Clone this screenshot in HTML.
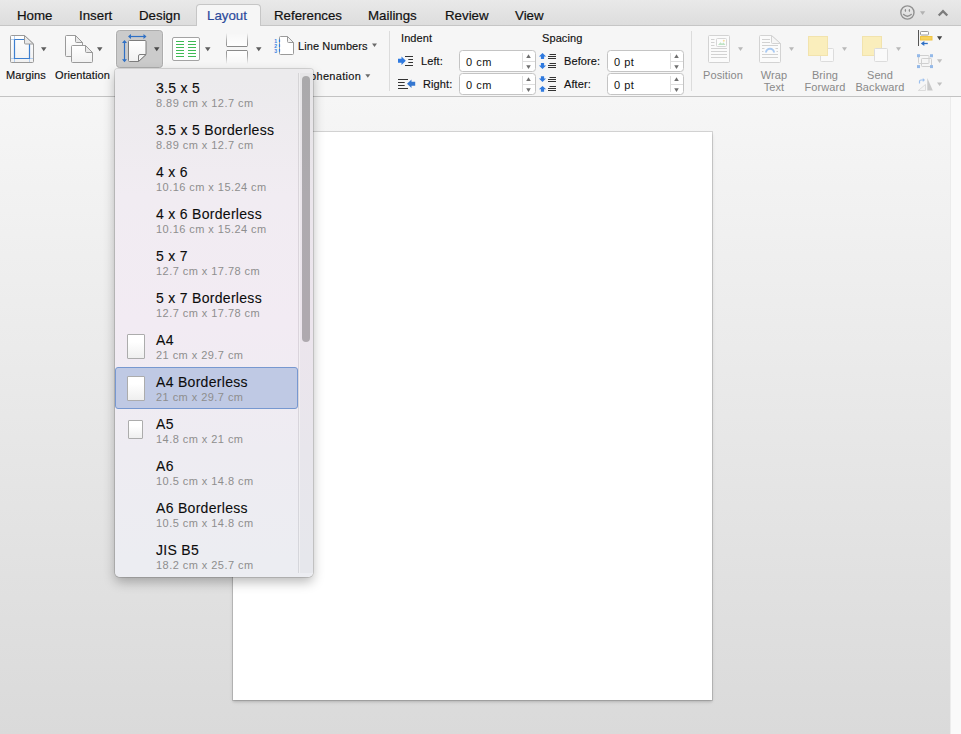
<!DOCTYPE html>
<html>
<head>
<meta charset="utf-8">
<title>Layout</title>
<style>
html,body{margin:0;padding:0;}
body{width:961px;height:734px;overflow:hidden;position:relative;font-family:"Liberation Sans",sans-serif;color:#000;background:#e6e6e6;}
.abs{position:absolute;}
#doc{left:0;top:97px;width:950px;height:637px;background:linear-gradient(#f6f6f6,#dadada);}
#vscroll{left:950px;top:97px;width:11px;height:637px;background:#fafafa;border-left:1px solid #ececec;box-sizing:border-box;}
#page{left:233px;top:132px;width:479px;height:568px;background:#fff;box-shadow:0 0 0 1px rgba(0,0,0,.13),0 2px 2px rgba(0,0,0,.10),0 2px 4px rgba(0,0,0,.10);}
#tabbar{left:0;top:0;width:961px;height:26px;background:linear-gradient(#e9e9e9,#dddddd);border-bottom:1px solid #c6c6c6;box-sizing:border-box;}
.tab{position:absolute;top:8px;font-size:13.3px;line-height:15px;color:#111;white-space:nowrap;-webkit-text-stroke:.2px currentColor;}
#tabsel{left:195.5px;top:3.5px;width:65px;height:23.5px;background:#f6f6f6;border:1px solid #c6c6c6;border-bottom:none;border-radius:4px 4px 0 0;box-sizing:border-box;}
#ribbon{left:0;top:26px;width:961px;height:71px;background:#f6f6f6;border-bottom:1px solid #c3c3c3;box-sizing:border-box;}
.lbl{position:absolute;font-size:11px;line-height:13px;white-space:nowrap;color:#111;letter-spacing:.1px;-webkit-text-stroke:.15px #111;}
.dis{color:#898989;-webkit-text-stroke:0;line-height:12px;}
.arr{position:absolute;width:0;height:0;border-left:3px solid transparent;border-right:3px solid transparent;border-top:4px solid #6e6e6e;}
.arr.d{border-top-color:#bdbdbd;}
.sep{position:absolute;top:31px;width:1px;height:60px;background:#dcdcdc;}
.inp{position:absolute;width:77px;background:#fff;border:1px solid #c4c4c4;border-radius:3.5px;box-sizing:border-box;font-size:11px;line-height:23px;padding-left:6px;letter-spacing:.5px;color:#111;height:22px;}
.inp i{position:absolute;left:62px;top:2px;width:1px;height:16px;background:#dedede;}
.inp u{position:absolute;left:63px;top:10px;width:12px;height:1px;background:#dedede;}
.inp b{position:absolute;left:66px;width:0;height:0;border-left:2.5px solid transparent;border-right:2.5px solid transparent;}
.inp b.u{top:3px;border-bottom:4px solid #808080;}
.inp b.dn{top:14px;border-top:4px solid #808080;}
#selbtn{left:116px;top:30px;width:47px;height:38px;background:#cbcbcb;border:1px solid #adadad;border-radius:3.5px;box-sizing:border-box;box-shadow:0 0 0 1px rgba(255,255,255,.6);}
#menu{left:115px;top:69px;width:198px;height:508px;background:linear-gradient(180deg,#ecebed 0%,#ecebed 2%,#f1ecf2 25%,#f2ebf3 50%,#eeecf2 75%,#ecedf2 97%,#ecedf2 100%);border-radius:3px 3px 5px 5px;box-shadow:0 0 0 1px rgba(0,0,0,.13),0 5px 12px rgba(0,0,0,.28);overflow:hidden;}
.it{position:absolute;left:0;width:183px;height:42px;}
.it .t{position:absolute;left:41px;top:13px;font-size:14px;line-height:16px;color:#0c0c0c;white-space:nowrap;letter-spacing:.3px;-webkit-text-stroke:.1px #0c0c0c;}
.it .s{position:absolute;left:41px;top:30px;font-size:11px;line-height:13px;color:#8e8e8e;white-space:nowrap;letter-spacing:.45px;}
.it.sel{background:#bfc9e4;border:1px solid #7798d0;border-radius:3px;box-sizing:border-box;}
.pg{position:absolute;background:linear-gradient(#fff 30%,#efefef);border:1px solid #acacac;border-radius:1px;box-sizing:border-box;}
#track{left:183px;top:4px;width:15px;height:500px;background:rgba(0,0,0,.022);border-left:1px solid rgba(0,0,0,.07);box-shadow:inset 1px 0 0 rgba(255,255,255,.35);box-sizing:border-box;}
#thumb{left:187px;top:7px;width:8px;height:266px;background:rgba(0,0,0,.26);border-radius:4px;}
</style>
</head>
<body>
<div id="doc" class="abs"></div>
<div id="vscroll" class="abs"></div>
<div id="page" class="abs"></div>

<div id="tabbar" class="abs"></div>
<div id="tabsel" class="abs"></div>
<div class="tab" style="left:17px">Home</div>
<div class="tab" style="left:79px">Insert</div>
<div class="tab" style="left:139px">Design</div>
<div class="tab" style="left:207px;color:#2b4a9b">Layout</div>
<div class="tab" style="left:274px">References</div>
<div class="tab" style="left:368px">Mailings</div>
<div class="tab" style="left:445px">Review</div>
<div class="tab" style="left:515px">View</div>

<div id="ribbon" class="abs"></div>
<div id="selbtn" class="abs"></div>

<!-- ribbon labels -->
<div class="lbl" style="left:6px;top:69px">Margins</div>
<div class="lbl" style="left:55px;top:69px">Orientation</div>
<div class="lbl" style="left:298px;top:40px">Line Numbers</div>
<div class="lbl" style="left:296px;top:70px;letter-spacing:.3px">Hyphenation</div>
<div class="lbl" style="left:401px;top:32px">Indent</div>
<div class="lbl" style="left:542px;top:32px">Spacing</div>
<div class="lbl" style="left:421px;top:55px">Left:</div>
<div class="lbl" style="left:423px;top:78px">Right:</div>
<div class="lbl" style="left:564px;top:55px">Before:</div>
<div class="lbl" style="left:564px;top:78px">After:</div>
<div class="inp" style="left:459px;top:50px">0 cm<i></i><u></u></div>
<div class="inp" style="left:459px;top:73px">0 cm<i></i><u></u></div>
<div class="inp" style="left:607px;top:50px">0 pt<i></i><u></u></div>
<div class="inp" style="left:607px;top:73px">0 pt<i></i><u></u></div>
<div class="sep" style="left:389px"></div>
<div class="sep" style="left:691px"></div>
<div class="lbl dis" style="left:703px;top:69px">Position</div>
<div class="lbl dis" style="left:760px;top:69px;text-align:center;width:28px">Wrap<br>Text</div>
<div class="lbl dis" style="left:804px;top:69px;text-align:center;width:42px">Bring<br>Forward</div>
<div class="lbl dis" style="left:855px;top:69px;text-align:center;width:50px">Send<br>Backward</div>

<svg class="abs" style="left:0;top:0" width="961" height="97" viewBox="0 0 961 97">
<defs>
<linearGradient id="pgf" x1="0" y1="0" x2="0" y2="1"><stop offset="0" stop-color="#ffffff"/><stop offset="1" stop-color="#f1f1f1"/></linearGradient>
<linearGradient id="fadeUp" x1="0" y1="0" x2="0" y2="1"><stop offset="0" stop-color="#8a8a8a" stop-opacity="0"/><stop offset=".55" stop-color="#8a8a8a" stop-opacity=".7"/><stop offset="1" stop-color="#8a8a8a"/></linearGradient>
<linearGradient id="fadeDn" x1="0" y1="1" x2="0" y2="0"><stop offset="0" stop-color="#8a8a8a" stop-opacity="0"/><stop offset=".55" stop-color="#8a8a8a" stop-opacity=".7"/><stop offset="1" stop-color="#8a8a8a"/></linearGradient>
<linearGradient id="fillUp" x1="0" y1="0" x2="0" y2="1"><stop offset="0" stop-color="#fff" stop-opacity="0"/><stop offset="1" stop-color="#fff"/></linearGradient>
<linearGradient id="fillDn" x1="0" y1="1" x2="0" y2="0"><stop offset="0" stop-color="#fff" stop-opacity="0"/><stop offset="1" stop-color="#fff"/></linearGradient>
</defs>
<path d="M41 47.3H46.5L43.75 51.3Z" fill="#5e5e5e"/>
<path d="M97 47.3H102.5L99.75 51.3Z" fill="#5e5e5e"/>
<path d="M154 47.3H159.5L156.75 51.3Z" fill="#4a4a4a"/>
<path d="M205 47.3H210.5L207.75 51.3Z" fill="#5e5e5e"/>
<path d="M256 47.3H261.5L258.75 51.3Z" fill="#5e5e5e"/>
<path d="M372 43.5H377L374.5 47Z" fill="#6a6a6a"/>
<path d="M365.3 74.2H370.3L367.8 77.700Z" fill="#6a6a6a"/>
<path d="M738 47.2H743L740.5 51Z" fill="#b9b9b9"/>
<path d="M789 47.2H794L791.5 51Z" fill="#b9b9b9"/>
<path d="M842 47.2H847L844.5 51Z" fill="#b9b9b9"/>
<path d="M896 47.2H901L898.5 51Z" fill="#b9b9b9"/>
<g>
<path d="M11.5 35.5H24.5L33.5 44V61.5a1 1 0 0 1-1 1H11.5a1 1 0 0 1-1-1V36.5a1 1 0 0 1 1-1Z" fill="url(#pgf)" stroke="#9a9a9a"/>
<path d="M14.5 36V62M29.5 44V62M11 39.5H24M11 58.5H33" stroke="#b4cff0" stroke-width="1" fill="none"/>
<path d="M14.5 39.5H24.5M29.5 44V58.5H14.5V39.5" stroke="#3c7fd0" stroke-width="1.2" fill="none"/>
<path d="M24.5 35.5V43a1 1 0 0 0 1 1H33.5Z" fill="#e9e9e9" stroke="#9a9a9a" stroke-linejoin="round"/>
</g>
<g>
<path d="M66.5 35.5H75.5L82.5 42.5V55.5a1 1 0 0 1-1 1H66.5a1 1 0 0 1-1-1V36.5a1 1 0 0 1 1-1Z" fill="url(#pgf)" stroke="#9a9a9a"/>
<path d="M75.5 35.5V41.5a1 1 0 0 0 1 1H82.5Z" fill="#e9e9e9" stroke="#9a9a9a" stroke-linejoin="round"/>
<path d="M72.5 45.5H85.5L92.5 52.5V61.5a1 1 0 0 1-1 1H72.5a1 1 0 0 1-1-1V46.5a1 1 0 0 1 1-1Z" fill="url(#pgf)" stroke="#9a9a9a"/>
<path d="M85.5 45.5V51.5a1 1 0 0 0 1 1H92.5Z" fill="#e9e9e9" stroke="#9a9a9a" stroke-linejoin="round"/>
</g>
<g>
<path d="M129.5 40.5H145a1 1 0 0 1 1 1V54.5L138.5 61.5H129.5a1 1 0 0 1-1-1V41.5a1 1 0 0 1 1-1Z" fill="url(#pgf)" stroke="#7d7d7d"/>
<path d="M138.5 61.5V56a1.5 1.5 0 0 1 1.5-1.5H146Z" fill="#f4f4f4" stroke="#7d7d7d" stroke-linejoin="round"/>
<path d="M129 36.5H145.5" stroke="#2f70c5" stroke-width="1.2"/>
<path d="M131 34L128 36.5L131 39ZM143.500 34L146.500 36.500L143.500 39Z" fill="#2f70c5"/>
<path d="M124.500 41V61" stroke="#2f70c5" stroke-width="1.2"/>
<path d="M122 43L124.500 40L127 43ZM122 59.300L124.500 62.300L127 59.300Z" fill="#2f70c5"/>
</g>
<g><rect x="172.5" y="37.500" width="27" height="23" rx="1.5" fill="#fff" stroke="#a3a3a3"/><path d="M176 41.5H184M188 41.5H196" stroke="#3fbb55" stroke-width="1.1"/><path d="M176 44.5H184M188 44.5H196" stroke="#3fbb55" stroke-width="1.1"/><path d="M176 47.5H184M188 47.5H196" stroke="#3fbb55" stroke-width="1.1"/><path d="M176 50.5H184M188 50.5H196" stroke="#3fbb55" stroke-width="1.1"/><path d="M176 53.5H184M188 53.5H196" stroke="#3fbb55" stroke-width="1.1"/><path d="M176 56.5H184M188 56.5H196" stroke="#3fbb55" stroke-width="1.1"/></g>
<g>
<path d="M226.500 33V45.500a1 1 0 0 0 1 1H246.500a1 1 0 0 0 1-1V33Z" fill="url(#fillUp)"/>
<path d="M226.500 33V45.500a1 1 0 0 0 1 1H246.500a1 1 0 0 0 1-1V33" fill="none" stroke="url(#fadeUp)"/>
<path d="M227 46.500H247" stroke="#8a8a8a"/>
<path d="M226.500 64V51.500a1 1 0 0 1 1-1H246.500a1 1 0 0 1 1 1V64Z" fill="url(#fillDn)"/>
<path d="M226.500 64V51.500a1 1 0 0 1 1-1H246.500a1 1 0 0 1 1 1V64" fill="none" stroke="url(#fadeDn)"/>
<path d="M227 50.500H247" stroke="#8a8a8a"/>
</g>
<g>
<path d="M280.500 36.500H287.500L293.500 42.500V53.500a1 1 0 0 1-1 1H280.500a1 1 0 0 1-1-1V37.500a1 1 0 0 1 1-1Z" fill="#fff" stroke="#9a9a9a"/>
<path d="M287.500 36.500V41.500a1 1 0 0 0 1 1H293.500Z" fill="#f3f3f3" stroke="#9a9a9a" stroke-linejoin="round"/>
<path d="M279.500 39.500V53" stroke="#2f7ae0" stroke-width="1.2" stroke-dasharray="2.6 2.2"/>
<text x="274.300" y="43" font-family="Liberation Sans, sans-serif" font-size="5.200" font-weight="bold" fill="#3b82e0">1</text>
<text x="274.300" y="48" font-family="Liberation Sans, sans-serif" font-size="5.200" font-weight="bold" fill="#3b82e0">2</text>
<text x="274.300" y="53" font-family="Liberation Sans, sans-serif" font-size="5.200" font-weight="bold" fill="#3b82e0">3</text>
</g>
<g>
<path d="M405 56.500H413M408.300 59.500H413M408.300 62.500H413M405 65.500H413" stroke="#333" stroke-width="1"/>
<path d="M398 58.800H401.500V56.600L405.800 60.800L401.500 65V62.800H398Z" fill="#2f7ae0"/>
<path d="M398 79.500H408M398 82.500H404.700M398 85.500H404.700M398 88.500H408" stroke="#333" stroke-width="1"/>
<path d="M415.200 81.800H411.500V79.600L407 83.800L411.500 88V85.800H415.200Z" fill="#3577d0"/>
</g>
<g><path d="M542.5 53.1L546.1 56.5H544.1V58.9H540.9V56.5H538.9Z" fill="#2f7ae0"/><path d="M549.500 54.5H556M548 56.5H556M548 58.5H556" stroke="#333" stroke-width="1"/><path d="M542.5 68.9L546.1 65.5H544.1V63.1H540.9V65.5H538.9Z" fill="#2f7ae0"/><path d="M549.500 63.5H556M548 65.5H556M548 67.5H556" stroke="#333" stroke-width="1"/><path d="M542.5 82.0L546.1 78.60000000000001H544.1V76.2H540.9V78.60000000000001H538.9Z" fill="#2f7ae0"/><path d="M549.500 77.5H556M548 79.5H556M548 81.5H556" stroke="#333" stroke-width="1"/><path d="M542.5 85.9L546.1 89.30000000000001H544.1V91.7H540.9V89.30000000000001H538.9Z" fill="#2f7ae0"/><path d="M549.500 86.5H556M548 88.5H556M548 90.5H556" stroke="#333" stroke-width="1"/></g>
<path d="M526.2 58H530.8L528.5 54.2Z" fill="#6f6f6f"/>
<path d="M526.2 65.2H530.8L528.5 69Z" fill="#6f6f6f"/>
<path d="M526.2 81H530.8L528.5 77.2Z" fill="#6f6f6f"/>
<path d="M526.2 88.2H530.8L528.5 92Z" fill="#6f6f6f"/>
<path d="M674.2 58H678.8L676.5 54.2Z" fill="#6f6f6f"/>
<path d="M674.2 65.2H678.8L676.5 69Z" fill="#6f6f6f"/>
<path d="M674.2 81H678.8L676.5 77.2Z" fill="#6f6f6f"/>
<path d="M674.2 88.2H678.8L676.5 92Z" fill="#6f6f6f"/>
<g><rect x="708.500" y="35.500" width="21" height="27" rx="1" fill="#fbfbfb" stroke="#d3d3d3"/><path d="M711 39.5H714.500" stroke="#d2d2d2"/><path d="M711 42.5H714.500" stroke="#d2d2d2"/><path d="M711 45.5H714.500" stroke="#d2d2d2"/><path d="M711 48.5H727" stroke="#d2d2d2"/><path d="M711 51.5H727" stroke="#d2d2d2"/><path d="M711 54.5H727" stroke="#d2d2d2"/><path d="M711 57.5H727" stroke="#d2d2d2"/><rect x="716.500" y="38.500" width="10" height="8" rx="1" fill="#fdfdfd" stroke="#d6d6d6"/><path d="M718 45L720.500 42.200L722 43.800L723.500 42.600L725.500 45Z" fill="#bfe3c4"/><circle cx="723.800" cy="40.800" r="1" fill="#f7dfa0"/></g>
<g><path d="M760.500 35.500H771.500L780.500 43.500V61.500a1 1 0 0 1-1 1H760.500a1 1 0 0 1-1-1V36.500a1 1 0 0 1 1-1Z" fill="#fbfbfb" stroke="#d3d3d3"/><path d="M771.500 35.500V42.500a1 1 0 0 0 1 1H780.500Z" fill="#f6f6f6" stroke="#d3d3d3" stroke-linejoin="round"/><path d="M762 39.5H770" stroke="#d2d2d2"/><path d="M762 42.5H770" stroke="#d2d2d2"/><path d="M762 45.500H778" stroke="#d2d2d2"/><path d="M762 48.500H764.500M775.500 48.500H778M762 51.500H763.500M776.500 51.500H778" stroke="#d2d2d2"/><path d="M762 54.5H778" stroke="#d2d2d2"/><path d="M762 57.5H778" stroke="#d2d2d2"/><path d="M765 52.600A5 4.800 0 0 1 775 52.600H773A3 2.800 0 0 0 767 52.600Z" fill="#a9caf3"/></g>
<g>
<rect x="820.500" y="48.500" width="13" height="13" rx="1" fill="#fafafa" stroke="#dcdcdc"/>
<rect x="808.500" y="36.500" width="19" height="19" fill="#faeebc" stroke="#f2e3ad"/>
</g>
<g>
<rect x="862.500" y="36.500" width="19" height="19" fill="#faeebc" stroke="#f2e3ad"/>
<rect x="874.500" y="48.500" width="13" height="13" rx="1" fill="#fafafa" stroke="#dcdcdc"/>
</g>
<g>
<circle cx="907.400" cy="12.500" r="6.600" fill="none" stroke="#909090" stroke-width="1.400"/>
<ellipse cx="905.400" cy="10.500" rx=".7" ry="1.400" fill="#909090"/><ellipse cx="909.400" cy="10.500" rx=".7" ry="1.400" fill="#909090"/>
<path d="M903.400 14.300Q907.400 18.200 911.400 14.300" fill="none" stroke="#909090" stroke-width="1.200" stroke-linecap="round"/>
</g>
<path d="M920 11.200H925.200L922.600 15Z" fill="#b2b2b2"/>
<path d="M938.700 15.500L943 11.200L947.300 15.500" fill="none" stroke="#7c7c7c" stroke-width="2.300" stroke-linecap="butt" stroke-linejoin="miter"/>
<g>
<path d="M918.500 30V46" stroke="#555" stroke-width="1"/>
<rect x="920.500" y="31.500" width="8" height="3.500" rx=".8" fill="#fff" stroke="#9a9a9a"/>
<rect x="920.500" y="36.500" width="11.500" height="3.500" fill="#f7d35c" stroke="#f0c444"/>
<path d="M923 43.500H927.800" stroke="#2f70c5" stroke-width="1.300"/>
<path d="M924.300 40.900L920.800 43.500L924.300 46.100Z" fill="#2f70c5"/>
</g>
<path d="M937 36.2H942.2L939.6 40.2Z" fill="#444"/>
<g>
<rect x="918.500" y="55.500" width="10.500" height="8" rx=".8" fill="none" stroke="#d0d0d0"/>
<rect x="921.500" y="58.500" width="10" height="8" rx=".8" fill="none" stroke="#d0d0d0"/>
<rect x="917" y="54.200" width="3" height="3" fill="#94b9e8"/><rect x="930" y="54.200" width="3" height="3" fill="#94b9e8"/>
<rect x="917" y="65.100" width="3" height="3" fill="#94b9e8"/><rect x="930" y="65.100" width="3" height="3" fill="#94b9e8"/>
</g>
<path d="M937 59.3H942.2L939.6 63Z" fill="#c0c0c0"/>
<g>
<path d="M927.300 90.500V78L932.800 90.500Z" fill="#c9c9c9"/>
<path d="M925.500 84.500V90.500H918.300Z" fill="#f4f4f4" stroke="#d5d5d5" stroke-width=".8"/>
<path d="M919.500 83.500V81.500a1.500 1.500 0 0 1 1.500-1.500H923.500" fill="none" stroke="#9cc0ee" stroke-width="1.200"/>
<path d="M922.800 78L925 80L922.800 82Z" fill="#9cc0ee"/>
</g>
<path d="M937 82.4H942.2L939.6 86Z" fill="#c0c0c0"/>
</svg>
<!-- dropdown menu -->
<div id="menu" class="abs">
  <div class="it" style="top:-2px"><div class="t">3.5 x 5</div><div class="s">8.89 cm x 12.7 cm</div></div>
  <div class="it" style="top:40px"><div class="t">3.5 x 5 Borderless</div><div class="s">8.89 cm x 12.7 cm</div></div>
  <div class="it" style="top:82px"><div class="t">4 x 6</div><div class="s">10.16 cm x 15.24 cm</div></div>
  <div class="it" style="top:124px"><div class="t">4 x 6 Borderless</div><div class="s">10.16 cm x 15.24 cm</div></div>
  <div class="it" style="top:166px"><div class="t">5 x 7</div><div class="s">12.7 cm x 17.78 cm</div></div>
  <div class="it" style="top:208px"><div class="t">5 x 7 Borderless</div><div class="s">12.7 cm x 17.78 cm</div></div>
  <div class="it" style="top:250px"><div class="t">A4</div><div class="s">21 cm x 29.7 cm</div></div>
  <div class="it sel" style="top:298px;height:42px"><div class="t" style="left:40px;top:6px">A4 Borderless</div><div class="s" style="left:40px;top:23px">21 cm x 29.7 cm</div></div>
  <div class="it" style="top:334px"><div class="t">A5</div><div class="s">14.8 cm x 21 cm</div></div>
  <div class="it" style="top:376px"><div class="t">A6</div><div class="s">10.5 cm x 14.8 cm</div></div>
  <div class="it" style="top:418px"><div class="t">A6 Borderless</div><div class="s">10.5 cm x 14.8 cm</div></div>
  <div class="it" style="top:460px"><div class="t">JIS B5</div><div class="s">18.2 cm x 25.7 cm</div></div>
  <div class="pg" style="left:12px;top:265px;width:18px;height:25px"></div>
  <div class="pg" style="left:12px;top:307px;width:18px;height:25px"></div>
  <div class="pg" style="left:13px;top:351px;width:15px;height:19px"></div>
  <div id="track" class="abs"></div>
  <div id="thumb" class="abs"></div>
</div>
</body>
</html>
